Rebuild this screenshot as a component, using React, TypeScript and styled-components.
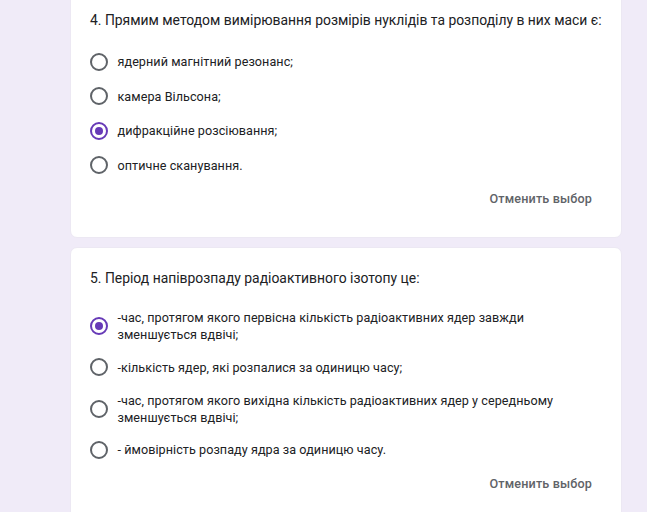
import React, { useState } from "react";
import styled, { createGlobalStyle } from "styled-components";

const GlobalStyle = createGlobalStyle`
  html, body {
    margin: 0;
    padding: 0;
    background: #f0ebf8;
    overflow: hidden;
  }
`;

const Page = styled.div`
  display: flex;
  flex-direction: column;
  gap: 9px;
  width: 552px;
  margin: -11px 0 0 70px;
  font-family: Roboto, "Noto Sans", sans-serif;
`;

const Card = styled.div`
  display: flex;
  flex-direction: column;
  background: #ffffff;
  border: 1px solid #ece8f3;
  border-radius: 7px;
  padding: 20px 16px 22px 19px;
`;

const Question = styled.div`
  font-size: 13.9px;
  line-height: 21.6px;
  color: #202124;
  margin-bottom: 13px;
`;

const OptionList = styled.div`
  display: flex;
  flex-direction: column;
`;

const Option = styled.label`
  box-sizing: border-box;
  display: flex;
  align-items: center;
  min-height: 34.5px;
  padding: 7px 0;
  cursor: pointer;
`;

const Radio = styled.span<{ $checked: boolean }>`
  flex: none;
  box-sizing: border-box;
  width: 18px;
  height: 18px;
  border-radius: 50%;
  border: 2px solid ${(p) => (p.$checked ? "#673ab7" : "#5f6368")};
  display: flex;
  align-items: center;
  justify-content: center;

  &::after {
    content: "";
    width: 8px;
    height: 8px;
    border-radius: 50%;
    background: #673ab7;
    display: ${(p) => (p.$checked ? "block" : "none")};
  }
`;

const OptionText = styled.span`
  margin-left: 9.5px;
  margin-right: 5px;
  font-size: 12.6px;
  line-height: 17px;
  letter-spacing: 0.06px;
  color: #202124;
`;

const Footer = styled.div`
  display: flex;
  justify-content: flex-end;
  padding-right: 5px;
`;

const ClearButton = styled.button`
  border: none;
  background: transparent;
  height: 32px;
  padding: 0 8px;
  font-family: Roboto, "Open Sans", sans-serif;
  font-weight: 500;
  font-size: 12.6px;
  letter-spacing: 0.15px;
  color: #5f6368;
  cursor: pointer;
  border-radius: 4px;
`;

type QuestionData = {
  title: string;
  options: string[];
  selected: number;
};

const questions: QuestionData[] = [
  {
    title: "4. Прямим методом вимірювання розмірів нуклідів та розподілу в них маси є:",
    options: [
      "ядерний магнітний резонанс;",
      "камера Вільсона;",
      "дифракційне розсіювання;",
      "оптичне сканування.",
    ],
    selected: 2,
  },
  {
    title: "5. Період напіврозпаду радіоактивного ізотопу це:",
    options: [
      "-час, протягом якого первісна кількість радіоактивних ядер завжди зменшується вдвічі;",
      "-кількість ядер, які розпалися за одиницю часу;",
      "-час, протягом якого вихідна кількість радіоактивних ядер у середньому зменшується вдвічі;",
      "- ймовірність розпаду ядра за одиницю часу.",
    ],
    selected: 0,
  },
];

function QuestionCard({ data }: { data: QuestionData }) {
  const [selected, setSelected] = useState(data.selected);

  return (
    <Card>
      <Question>{data.title}</Question>
      <OptionList>
        {data.options.map((text, i) => (
          <Option key={i} onClick={() => setSelected(i)}>
            <Radio $checked={selected === i} />
            <OptionText>{text}</OptionText>
          </Option>
        ))}
      </OptionList>
      <Footer>
        <ClearButton onClick={() => setSelected(-1)}>Отменить выбор</ClearButton>
      </Footer>
    </Card>
  );
}

export default function App() {
  return (
    <>
      <GlobalStyle />
      <Page>
        {questions.map((q, i) => (
          <QuestionCard key={i} data={q} />
        ))}
      </Page>
    </>
  );
}
